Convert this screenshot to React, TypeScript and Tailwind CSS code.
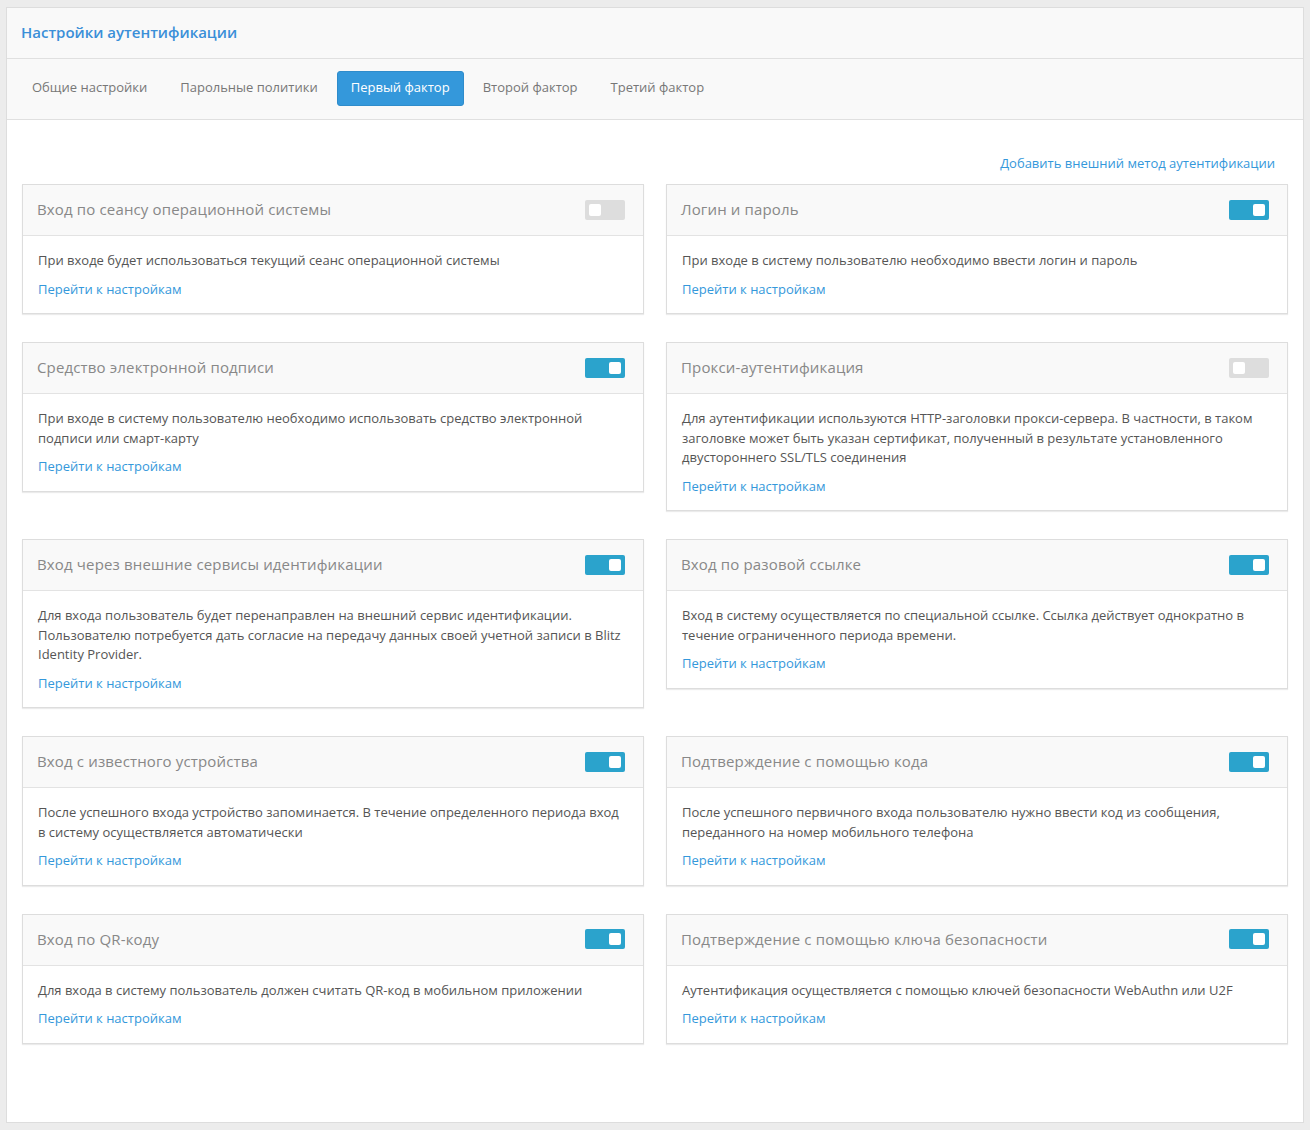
const tabs = ['Общие настройки', 'Парольные политики', 'Первый фактор', 'Второй фактор', 'Третий фактор']

interface Method {
  title: string
  text: string
  on: boolean
}

const rows: Method[][] = [
  [
    {
      title: 'Вход по сеансу операционной системы',
      text: 'При входе будет использоваться текущий сеанс операционной системы',
      on: false,
    },
    {
      title: 'Логин и пароль',
      text: 'При входе в систему пользователю необходимо ввести логин и пароль',
      on: true,
    },
  ],
  [
    {
      title: 'Средство электронной подписи',
      text: 'При входе в систему пользователю необходимо использовать средство электронной подписи или смарт-карту',
      on: true,
    },
    {
      title: 'Прокси-аутентификация',
      text: 'Для аутентификации используются HTTP-заголовки прокси-сервера. В частности, в таком заголовке может быть указан сертификат, полученный в результате установленного двустороннего SSL/TLS соединения',
      on: false,
    },
  ],
  [
    {
      title: 'Вход через внешние сервисы идентификации',
      text: 'Для входа пользователь будет перенаправлен на внешний сервис идентификации. Пользователю потребуется дать согласие на передачу данных своей учетной записи в Blitz Identity Provider.',
      on: true,
    },
    {
      title: 'Вход по разовой ссылке',
      text: 'Вход в систему осуществляется по специальной ссылке. Ссылка действует однократно в течение ограниченного периода времени.',
      on: true,
    },
  ],
  [
    {
      title: 'Вход с известного устройства',
      text: 'После успешного входа устройство запоминается. В течение определенного периода вход в систему осуществляется автоматически',
      on: true,
    },
    {
      title: 'Подтверждение с помощью кода',
      text: 'После успешного первичного входа пользователю нужно ввести код из сообщения, переданного на номер мобильного телефона',
      on: true,
    },
  ],
  [
    {
      title: 'Вход по QR-коду',
      text: 'Для входа в систему пользователь должен считать QR-код в мобильном приложении',
      on: true,
    },
    {
      title: 'Подтверждение с помощью ключа безопасности',
      text: 'Аутентификация осуществляется с помощью ключей безопасности WebAuthn или U2F',
      on: true,
    },
  ],
]

function Toggle({ on }: { on: boolean }) {
  return (
    <div
      className={
        on
          ? 'w-[40px] h-[20px] rounded-[2px] bg-[#2ba3cc] flex items-center justify-end px-[4px]'
          : 'w-[40px] h-[20px] rounded-[2px] bg-[#dddddd] flex items-center justify-start px-[4px]'
      }
    >
      <div className="w-[12px] h-[12px] rounded-[2px] bg-white" />
    </div>
  )
}

function MethodCard({ m }: { m: Method }) {
  return (
    <div className="bg-white border border-[#dddddd] shadow-[0_1px_1px_rgba(0,0,0,0.08)]">
      {/* Card header */}
      <div className="h-[51px] bg-[#f9f9f9] border-b border-[#e3e3e3] flex items-center justify-between pl-[14px] pr-[18px] pb-[1px]">
        <span className="text-[15px] tracking-[0.15px] text-[#888888]">{m.title}</span>
        <Toggle on={m.on} />
      </div>
      <div className="px-[15px] pt-[15px] pb-[14.5px]">
        <p className="text-[13px] leading-[19.5px] text-[#555555]">{m.text}</p>
        <a className="block mt-[8px] text-[13px] leading-[20px] text-[#3498db] cursor-pointer">
          Перейти к настройкам
        </a>
      </div>
    </div>
  )
}

export default function App() {
  return (
    <div className="min-h-[1130px] bg-[#ececec] px-[6px] pt-[7px] pb-[7px] font-['Open_Sans',sans-serif]">
      <div className="bg-white border border-[#dddddd]">
        {/* Header */}
        <div className="h-[51px] bg-[#f9f9f9] border-b border-[#e0e0e0] flex items-center px-[14px] pb-[2px]">
          <h1 className="text-[15px] font-semibold text-[#3a8fd8]">Настройки аутентификации</h1>
        </div>

        {/* Tabs */}
        <div className="h-[61px] bg-[#f9f9f9] border-b border-[#e0e0e0] flex items-center gap-[5px] px-[11px] pb-[2px]">
          {tabs.map((t, i) =>
            i === 2 ? (
              <button
                key={t}
                className="h-[35px] px-[13px] rounded-[3px] bg-[#3498db] border border-[#2f8ccb] text-[13px] text-white"
              >
                {t}
              </button>
            ) : (
              <button key={t} className="h-[35px] px-[14px] text-[13px] text-[#777777]">
                {t}
              </button>
            )
          )}
        </div>

        {/* Body */}
        <div className="px-[15px] pt-[33px] pb-[78px]">
          <div className="flex justify-end pr-[13px] mb-[11px]">
            <a className="text-[13px] leading-[20px] text-[#3498db] cursor-pointer">
              Добавить внешний метод аутентификации
            </a>
          </div>

          <div className="flex flex-col gap-[28px]">
            {rows.map((row, i) => (
              <div key={i} className="grid grid-cols-2 gap-[22px] items-start">
                {row.map((m) => (
                  <MethodCard key={m.title} m={m} />
                ))}
              </div>
            ))}
          </div>
        </div>
      </div>
    </div>
  )
}
